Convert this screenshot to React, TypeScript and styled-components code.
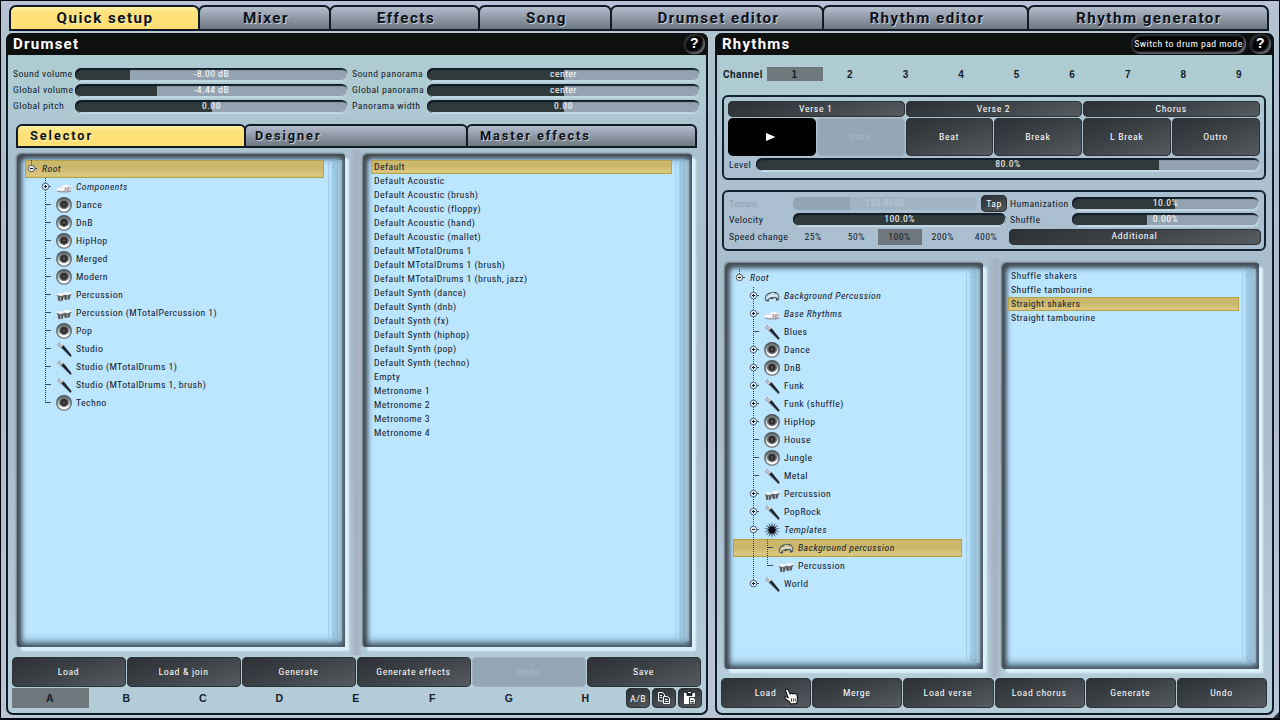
import React from 'react';
import styled, { createGlobalStyle, css } from 'styled-components';

const Global = createGlobalStyle`
  * { box-sizing: border-box; }
  html, body { margin: 0; padding: 0; }
  body {
    width: 1280px; height: 720px; overflow: hidden;
    font-family: "Roboto Condensed", Roboto, "Liberation Sans", sans-serif;
    font-size: 9.8px; letter-spacing: 0.42px; color: #14202c;
    white-space: nowrap;
  }
`;

const Window = styled.div`
  position: relative;
  width: 1280px; height: 720px;
  padding: 4px 5px 4px 5px;
  border: 1px solid #04060e;
  border-width: 1px 1px 2px 1px;
  background: linear-gradient(180deg, #b9c0d6 0, #b2c3d0 30px, #adbccb 160px, #b0bacb 420px, #b9c5d6 700px);
`;

const MainTabs = styled.nav`
  display: flex; height: 26px; margin: 0 4px 2px 3px;
`;

const tabBase = css<{ $active?: boolean }>`
  border: 2px solid #101a24;
  font-family: Roboto, "Liberation Sans", sans-serif;
  font-weight: bold;
  color: #0d1219;
  background: ${p => p.$active
    ? 'linear-gradient(180deg, #fff0a8 0, #ffe27c 25%, #ffdf74 100%)'
    : 'linear-gradient(180deg, #b3bdcb 0, #a0aaba 25%, #7e8893 75%, #6e7880 100%)'};
  text-shadow: 1px 1px 0 ${p => (p.$active ? '#fff0b4' : '#c3ccd8')};
  & + & { margin-left: -2px; }
`;

const MainTab = styled.button<{ $active?: boolean; $w: number }>`
  ${tabBase}
  width: ${p => p.$w}px; height: 26px; padding: 0 0 0 1px;
  border-radius: 7px 7px 0 0;
  font-size: 15.2px; letter-spacing: 1.45px; line-height: 22px;
  & + & { padding-left: 3px; }
  &:last-child { padding-left: 2px; }
`;

const Panels = styled.main`
  display: flex; gap: 7px; height: 682px;
`;

const Panel = styled.section<{ $w: number }>`
  width: ${p => p.$w}px; height: 682px;
  display: flex; flex-direction: column;
  border: 2px solid #0f1b26; border-top: 0;
  border-radius: 7px;
  background: linear-gradient(180deg, #aeccd2 0, #aecbd2 60px, #abc0d0 130px, #a9bfce 230px, #abbdcd 400px, #b3ccd7 640px);
  box-shadow: 0 0 0 1px rgba(200, 216, 230, .35);
`;

const TitleBar = styled.header`
  display: flex; align-items: center; gap: 4px;
  height: 22px; margin: 0 -2px; padding: 0 3px 0 7px;
  border-radius: 7px 7px 0 0;
  background: #0e0f0f; color: #fff;
  flex: none;
`;

const Title = styled.h1`
  margin: 0; flex: 1; line-height: 22px;
  font-family: Roboto, "Liberation Sans", sans-serif; font-size: 15px; letter-spacing: 1.25px;
`;

const BlackPill = styled.button<{ $w: number }>`
  width: ${p => p.$w}px; height: 20px; padding: 0 0 2px;
  border: 0; border-radius: 9px; color: #fff;
  font: inherit; letter-spacing: 0.42px;
  background: #050505;
  box-shadow: inset -2px -2px 2px #63676b, inset 2px 2px 2px #303236;
`;

const Help = styled(BlackPill)`
  font-family: "Liberation Sans", sans-serif; font-size: 14px; font-weight: bold;
`;

const Params = styled.div`
  display: grid; grid-template-columns: 62px 273px 79px 273px;
  grid-auto-rows: 16px; align-items: center;
  padding: 11px 0 0 5px; height: 68px; flex: none;
`;

const ParamLabel = styled.span<{ $second?: boolean }>`
  padding: 0 0 2px ${p => (p.$second ? 4 : 0)}px;
`;

const Track = styled.div<{ $off?: boolean }>`
  position: relative; flex: 1; height: 13px; overflow: hidden;
  border-radius: 6px;
  background: ${p => (p.$off ? '#a0b4c4' : '#93a3b1')};
  box-shadow: 0 1px 0 ${p => (p.$off ? 'transparent' : '#c3dde8')};
  color: ${p => (p.$off ? '#b9cbd8' : '#fff')};
  &::after {
    content: ''; position: absolute; inset: 0; border-radius: 6px;
    box-shadow: ${p => (p.$off ? 'none' : 'inset 1px 2px 1px #101c28, inset -1px -1px 0 #bfd6e2')};
  }
`;

const Fill = styled.div<{ $off?: boolean }>`
  height: 100%; background: ${p => (p.$off ? '#91a5b2' : '#303a3a')};
`;

const Value = styled.span`
  position: absolute; inset: 0; z-index: 1; text-align: center; line-height: 11.5px;
`;

function Slider({ value, fill, off }: { value: string; fill: number; off?: boolean }) {
  return (
    <Track $off={off}>
      <Fill $off={off} style={{ width: `${fill}%` }} />
      <Value>{value}</Value>
    </Track>
  );
}

const SubTabs = styled.nav`
  display: flex; height: 24px; margin: 1px 0 0 8px; flex: none;
`;

const SubTab = styled.button<{ $active?: boolean; $w: number; $pad: number }>`
  ${tabBase}
  width: ${p => p.$w}px; height: 24px; padding: 0 0 0 ${p => p.$pad}px;
  border-radius: 6px 6px 0 0; text-align: left;
  font-size: 12.8px; letter-spacing: 1.9px; line-height: 20px;
`;

const Lists = styled.div<{ $top: number; $left: number; $h: number }>`
  display: flex; margin: ${p => p.$top}px 0 0 ${p => p.$left}px; height: ${p => p.$h}px; flex: none;
`;

const Splitter = styled.div<{ $w: number }>`
  width: ${p => p.$w}px; margin: -4px 0 -8px;
  background: linear-gradient(90deg, rgba(165,180,198,0) 25%, #a6afc0 65%, rgba(165,180,198,0));
`;

const Well = styled.div<{ $w: number; $pad?: number; $gap?: number }>`
  display: flex; gap: ${p => p.$gap ?? 3}px; width: ${p => p.$w}px; height: 100%;
  padding: 6px 3px 6px ${p => p.$pad ?? 7}px;
  border-radius: 5px 3px 1px 3px;
  background: #bce5ff;
  box-shadow: 4px 4px 2px #dcf2fb, -1px -1px 2px #6d7a84,
    inset 4px 4px 4px 0 #434b51, inset -2px -2px 4px 0 #48535c,
    inset -3px -4px 9px 1px rgba(60, 85, 105, .75),
    inset 2px 3px 7px 2px rgba(70, 100, 125, .6);
`;

const Items = styled.div`
  flex: 1; display: flex; flex-direction: column;
`;

const ScrollBar = styled.div`
  display: flex; flex-direction: column; justify-content: space-between; align-items: center;
  width: 14px; padding: 3px 0 2px;
  border-left: 1px solid rgba(130, 175, 205, .45);
  border-right: 1px solid rgba(235, 248, 255, .3);
  background: linear-gradient(90deg, rgba(150,190,215,.1) 15%, rgba(130,175,202,.45) 35%, rgba(130,175,202,.45) 75%, rgba(220,240,255,.3) 85%);
`;

function Chevron({ down }: { down?: boolean }) {
  return (
    <svg width="9" height="6" viewBox="0 0 9 6">
      <path d={down ? 'M1 1l3.5 4L8 1z' : 'M1 5l3.5-4L8 5z'} fill="#a3c9e0" stroke="#8bb4cd" strokeWidth=".7" />
    </svg>
  );
}

const selected = css`
  background: linear-gradient(180deg, #cdb86c 0, #cbb76c 45%, #dcc87e 85%, #cdbb72 100%);
  box-shadow: inset 0 0 0 1px #b3a24c;
`;

const ListRow = styled.div<{ $on?: boolean }>`
  height: 14px; padding-left: 3px; line-height: 14px;
  ${p => p.$on && selected}
`;

const TreeRow = styled.div<{ $on?: boolean; $italic?: boolean }>`
  display: flex; align-items: center; height: 18px;
  font-style: ${p => (p.$italic ? 'italic' : 'normal')};
  ${p => p.$on && selected}
`;

const TreeLabel = styled.span<{ $root?: boolean }>`
  margin-left: ${p => (p.$root ? 3 : 4)}px; line-height: 18px;
`;

const IconSlot = styled.span`
  display: block; width: 16px; height: 18px; margin-left: 3px; flex: none;
  svg { display: block; }
`;

type Guide = 'none' | 'line' | 'tee' | 'end' | 'plus' | 'plusEnd' | 'minus' | 'root';

const GuideSvg = styled.svg`
  display: block; flex: none;
`;

function GuideCell({ kind }: { kind: Guide }) {
  const dash = { stroke: '#2a3d50', strokeWidth: 1, strokeDasharray: '1 1' };
  const hasNode = kind === 'plus' || kind === 'plusEnd' || kind === 'minus' || kind === 'root';
  const bottom = kind === 'line' || kind === 'tee' || kind === 'plus' || kind === 'minus' ? 18 : 9;
  return (
    <GuideSvg width="14" height="18" viewBox="0 0 14 18">
      {kind !== 'none' && <path d={`M6.5 0V${bottom}`} {...dash} />}
      {kind !== 'none' && kind !== 'line' && <path d="M7 8.5H12" stroke="#3d4f60" />}
      {hasNode && (
        <g>
          <circle cx="6.5" cy="8.5" r="3.3" fill={kind === 'root' ? '#e6e2d8' : '#d9effb'} stroke="#4a5763" strokeWidth=".9" />
          <path d={kind.startsWith('plus') ? 'M5 8.5h3M6.5 7v3' : 'M5 8.5h3'} stroke="#101820" />
        </g>
      )}
    </GuideSvg>
  );
}

type IconName = 'speaker' | 'mic' | 'bongo' | 'kit' | 'tamb' | 'star';

function TreeIcon({ name }: { name: IconName }) {
  const box = { width: 16, height: 18, viewBox: '0 0 16 18' };
  switch (name) {
    case 'speaker':
      return (
        <svg {...box}>
          <defs>
            <linearGradient id="rim" x1="0" y1="0" x2="0" y2="1">
              <stop offset="0" stopColor="#495156" /><stop offset="1" stopColor="#868f94" />
            </linearGradient>
            <linearGradient id="cone" x1="0" y1="0" x2="0" y2="1">
              <stop offset="0" stopColor="#697377" /><stop offset=".45" stopColor="#a9b2b6" /><stop offset=".75" stopColor="#ffffff" />
            </linearGradient>
          </defs>
          <circle cx="8" cy="9" r="8" fill="url(#rim)" />
          <circle cx="8" cy="9" r="6.4" fill="url(#cone)" />
          <circle cx="8" cy="8.400" r="4.900" fill="#6c7478" />
          <circle cx="8" cy="8.300" r="3.400" fill="#2d2626" />
          <circle cx="8" cy="8.600" r="1.500" fill="#5c5152" />
        </svg>
      );
    case 'mic':
      return (
        <svg {...box}>
          <path d="M4.600 7L7.600 5.200L15.600 15.200L14.600 17Z" fill="#1c2329" />
          <path d="M5 7.400L13.800 16.400" stroke="#7d8a94" strokeWidth=".8" />
          <path d="M1.400 5L4.200 2.400L7.400 5.400L4.600 7.400Z" fill="#d6dadd" />
          <path d="M1.200 5.200L4 2.400M2.600 6.600L5 4.400M4.400 7.800L7.200 5.400" stroke="#7d7479" strokeWidth=".9" />
        </svg>
      );
    case 'bongo':
      return (
        <svg {...box}>
          <path d="M1.200 8.500L2.200 14.400Q4.500 16 7 14.200L7.600 11L8.400 13.400Q11 14.800 13.600 13.200L15.200 8Z" fill="#6f777b" />
          <path d="M3 10.500v4.300M6.200 10.500v4M9.800 9.500v4M13 9v4" stroke="#3c4245" strokeWidth="1" />
          <path d="M4.500 10.500v5M11.400 9.500v4.500" stroke="#aeb7bb" strokeWidth=".8" />
          <ellipse cx="4.400" cy="8.600" rx="3.900" ry="1.700" fill="#f4f6f7" />
          <ellipse cx="11.600" cy="7.700" rx="4" ry="1.600" fill="#fbfcfc" />
          <path d="M.8 9.400Q4 11.400 8 9.900M7.800 9.100Q11.500 10.700 15.500 8.200" fill="none" stroke="#5a6064" strokeWidth=".9" />
        </svg>
      );
    case 'kit':
      return (
        <svg {...box}>
          <path d="M.8 11.800Q2.600 9 6.400 9.200L11 7L15 8L14.800 12Q10 15 5 13.800Z" fill="#e9e4e8" />
          <ellipse cx="5" cy="11" rx="4.400" ry="1.500" fill="#fbf8fa" />
          <ellipse cx="9.400" cy="8" rx="3.200" ry="1.200" fill="#ffffff" />
          <path d="M1.400 13Q4 14.400 8.400 13.800Q12 14.600 15 12.800" fill="none" stroke="#7f7980" strokeWidth="1" />
          <path d="M9.800 9.200L8.800 12.600M11.200 10Q13 9.400 14.600 10.600" fill="none" stroke="#94777b" strokeWidth=".9" />
          <circle cx="11.600" cy="11.800" r="1.100" fill="#9c8589" />
        </svg>
      );
    case 'tamb':
      return (
        <svg {...box}>
          <path d="M1.400 12.900Q.6 8.900 4.200 6.700Q9 4.100 13.200 6.300Q15.400 8.500 14.600 12.500L12.600 13.100Q13.400 10.600 11.800 10.400Q7 10.400 4.400 11.900L4 13.900Q2.400 14.500 1.400 12.900Z" fill="rgba(215,222,226,.35)" stroke="#5f676e" strokeWidth="1.100" />
          <path d="M3.600 9.600Q7.600 7.600 13.400 9.200" fill="none" stroke="#e2ebef" strokeWidth=".9" />
          <path d="M2.800 13l2 .8M6.400 11.400l2.800-.4M12.200 11.600l1.800 1.200M4.600 7l1.400-.8M10.400 5.500l1.600.6" stroke="#3a4248" strokeWidth="1.300" />
        </svg>
      );
    default:
      return (
        <svg {...box}>
          {[0, 26, 51, 77, 103, 129, 154].map(a => (
            <path key={a} d="M8 .8L9.100 9L8 17.200L6.900 9Z" fill="#18212a" transform={`rotate(${a} 8 9)`} />
          ))}
          <circle cx="8" cy="9" r="3.300" fill="#0a0e14" />
        </svg>
      );
  }
}

interface Node { label: string; guides: Guide[]; icon?: IconName; italic?: boolean; on?: boolean }

function Tree({ nodes }: { nodes: Node[] }) {
  return (
    <Items>
      {nodes.map((n, i) => (
        <TreeRow key={i} $on={n.on} $italic={n.italic}>
          {n.guides.map((g, j) => <GuideCell key={j} kind={g} />)}
          {n.icon && <IconSlot><TreeIcon name={n.icon} /></IconSlot>}
          <TreeLabel $root={!n.icon}>{n.label}</TreeLabel>
        </TreeRow>
      ))}
    </Items>
  );
}

const node = (label: string, guide: Guide, icon: IconName, italic = false): Node =>
  ({ label, guides: ['none', guide], icon, italic });

const drumTree: Node[] = [
  { label: 'Root', guides: ['root'], italic: true, on: true },
  node('Components', 'plus', 'kit', true),
  node('Dance', 'tee', 'speaker'),
  node('DnB', 'tee', 'speaker'),
  node('HipHop', 'tee', 'speaker'),
  node('Merged', 'tee', 'speaker'),
  node('Modern', 'tee', 'speaker'),
  node('Percussion', 'tee', 'bongo'),
  node('Percussion (MTotalPercussion 1)', 'tee', 'bongo'),
  node('Pop', 'tee', 'speaker'),
  node('Studio', 'tee', 'mic'),
  node('Studio (MTotalDrums 1)', 'tee', 'mic'),
  node('Studio (MTotalDrums 1, brush)', 'tee', 'mic'),
  node('Techno', 'end', 'speaker'),
];

const rhythmTree: Node[] = [
  { label: 'Root', guides: ['root'], italic: true },
  node('Background Percussion', 'plus', 'tamb', true),
  node('Base Rhythms', 'plus', 'kit', true),
  node('Blues', 'tee', 'mic'),
  node('Dance', 'plus', 'speaker'),
  node('DnB', 'plus', 'speaker'),
  node('Funk', 'plus', 'mic'),
  node('Funk (shuffle)', 'plus', 'mic'),
  node('HipHop', 'plus', 'speaker'),
  node('House', 'tee', 'speaker'),
  node('Jungle', 'tee', 'speaker'),
  node('Metal', 'tee', 'mic'),
  node('Percussion', 'plus', 'bongo'),
  node('PopRock', 'plus', 'mic'),
  node('Templates', 'minus', 'star', true),
  { label: 'Background percussion', guides: ['none', 'line', 'tee'], icon: 'tamb', italic: true, on: true },
  { label: 'Percussion', guides: ['none', 'line', 'end'], icon: 'bongo' },
  node('World', 'plusEnd', 'mic'),
];

const presets = [
  'Default', 'Default Acoustic', 'Default Acoustic (brush)', 'Default Acoustic (floppy)',
  'Default Acoustic (hand)', 'Default Acoustic (mallet)', 'Default MTotalDrums 1',
  'Default MTotalDrums 1 (brush)', 'Default MTotalDrums 1 (brush, jazz)', 'Default Synth (dance)',
  'Default Synth (dnb)', 'Default Synth (fx)', 'Default Synth (hiphop)', 'Default Synth (pop)',
  'Default Synth (techno)', 'Empty', 'Metronome 1', 'Metronome 2', 'Metronome 3', 'Metronome 4',
];

const rhythms = ['Shuffle shakers', 'Shuffle tambourine', 'Straight shakers', 'Straight tambourine'];

function Bar() {
  return <ScrollBar><Chevron /><Chevron down /></ScrollBar>;
}

const ButtonRow = styled.div<{ $top?: number; $pad?: string }>`
  display: flex; gap: 1px; margin-top: ${p => p.$top ?? 0}px; padding: ${p => p.$pad ?? 0};
  flex: none;
`;

const Button = styled.button<{ $h: number; $kind?: 'off' | 'play'; $w?: number }>`
  flex: ${p => (p.$w ? 'none' : '1 1 0')};
  width: ${p => (p.$w ? `${p.$w}px` : 'auto')};
  height: ${p => p.$h}px; min-width: 0; padding: 0 1px 2px 0;
  display: flex; align-items: center; justify-content: center;
  border: 0; border-radius: 5px; color: #fff;
  font: inherit; letter-spacing: 0.65px;
  background: linear-gradient(160deg, #2c3034 0, #3c4145 45%, #565c60 100%);
  box-shadow: inset 0 0 0 1px #2b3238;
  ${p => p.$kind === 'off' && css`
    background: #94a7b4; box-shadow: inset 0 0 0 1px #9cb0bf; color: #aabcc8;
  `}
  ${p => p.$kind === 'play' && css`background: #000; box-shadow: none; padding-bottom: 0;`}
`;

const SmallButton = styled(Button)`
  padding: 0; letter-spacing: 0.4px;
`;

const Segments = styled.div<{ $h: number; $w: number; $size?: number }>`
  display: flex; width: ${p => p.$w}px; height: ${p => p.$h}px; flex: none;
  ${p => p.$size && css`
    font-family: "Liberation Sans", sans-serif; font-weight: bold;
    font-size: ${p.$size}px; letter-spacing: 0;
  `}
`;

const Segment = styled.span<{ $on?: boolean; $lh: number }>`
  flex: 1 1 0; text-align: center; line-height: ${p => p.$lh}px; padding-right: 1px;
  background: ${p => (p.$on ? '#6f787c' : 'transparent')};
`;

const SlotRow = styled.div`
  display: flex; align-items: center; gap: 2px; padding: 1px 0 0 4px;
`;

const ChannelRow = styled.div`
  display: flex; align-items: center; height: 14px; margin: 12px 0 14px 6px; flex: none;
`;

const ChannelLabel = styled.span`
  width: 44px; font-family: Roboto, sans-serif; font-size: 10px; font-weight: bold;
`;

const Group = styled.div<{ $h: number; $mb?: number }>`
  height: ${p => p.$h}px; margin: 0 6px ${p => p.$mb ?? 0}px 5px; padding: 4px;
  border: 2px solid #14222d; border-radius: 6px; flex: none;
  background: rgba(170, 190, 208, .18);
`;

const LevelRow = styled.div`
  display: grid; grid-template-columns: 27px 504px; align-items: center;
  padding: 1px 0 0 1px; height: 15px;
`;

const TempoRow = styled.div<{ $down?: boolean }>`
  display: flex; align-items: center; height: 17px; padding-left: 1px;
  margin-top: ${p => (p.$down ? 0 : -1)}px;
`;

const Box = styled.div<{ $w: number; $pl?: number; $pr?: number; $off?: boolean }>`
  display: flex; width: ${p => p.$w}px; flex: none;
  padding: 0 ${p => p.$pr ?? 0}px 0 ${p => p.$pl ?? 0}px;
  color: ${p => (p.$off ? '#8da0b0' : 'inherit')};
`;

const Cursor = styled.svg`
  position: absolute; left: 783px; top: 687px;
`;

const Grip = styled.svg`
  position: absolute; right: 0; bottom: 0;
`;

const mainTabs: [string, number][] = [
  ['Quick setup', 191], ['Mixer', 133], ['Effects', 151], ['Song', 134],
  ['Drumset editor', 214], ['Rhythm editor', 207], ['Rhythm generator', 242],
];

const leftParams: [string, string, number, string, string, number][] = [
  ['Sound volume', '-8.00 dB', 20, 'Sound panorama', 'center', 50.2],
  ['Global volume', '-4.44 dB', 30, 'Global panorama', 'center', 50.2],
  ['Global pitch', '0.00', 50.2, 'Panorama width', '0.00', 50.2],
];

export default function App() {
  return (
    <>
      <Global />
      <Window>
        <MainTabs>
          {mainTabs.map(([t, w], i) => <MainTab key={t} $w={w} $active={i === 0}>{t}</MainTab>)}
        </MainTabs>
        <Panels>
          <Panel $w={703}>
            <TitleBar>
              <Title>Drumset</Title>
              <Help $w={21}>?</Help>
            </TitleBar>
            <Params>
              {leftParams.map(([a, v, f, b, w, g]) => (
                <React.Fragment key={a}>
                  <ParamLabel>{a}</ParamLabel><Slider value={v} fill={f} />
                  <ParamLabel $second>{b}</ParamLabel><Slider value={w} fill={g} />
                </React.Fragment>
              ))}
            </Params>
            <SubTabs>
              <SubTab $w={230} $pad={12} $active>Selector</SubTab>
              <SubTab $w={224} $pad={9}>Designer</SubTab>
              <SubTab $w={231} $pad={12}>Master effects</SubTab>
            </SubTabs>
            <Lists $top={6} $left={9} $h={493}>
              <Well $w={328} $pad={8} $gap={4}><Tree nodes={drumTree} /><Bar /></Well>
              <Splitter $w={18} />
              <Well $w={329} $pad={8}>
                <Items>{presets.map((t, i) => <ListRow key={t} $on={i === 0}>{t}</ListRow>)}</Items>
                <Bar />
              </Well>
            </Lists>
            <ButtonRow $top={10} $pad="0 5px 0 4px">
              <Button $h={30}>Load</Button>
              <Button $h={30}>Load &amp; join</Button>
              <Button $h={30}>Generate</Button>
              <Button $h={30}>Generate effects</Button>
              <Button $h={30} $kind="off">Undo</Button>
              <Button $h={30}>Save</Button>
            </ButtonRow>
            <SlotRow>
              <Segments $h={20} $w={612} $size={10.5}>
                {'ABCDEFGH'.split('').map((c, i) => <Segment key={c} $on={i === 0} $lh={21}>{c}</Segment>)}
              </Segments>
              <SmallButton $h={20} $w={24}>A/B</SmallButton>
              <SmallButton $h={20} $w={24}>
                <svg width="14" height="14" viewBox="0 0 14 14" fill="none" stroke="#fff">
                  <path d="M1.500 1.500h4l2 2v6.500h-6z" />
                  <path d="M3 4.500h2M3 6.500h2" />
                  <path d="M6.500 5.500h4l2 2v5h-6z" fill="#3c4145" />
                  <path d="M8 8.500h2.500M8 10.500h3.500" />
                </svg>
              </SmallButton>
              <SmallButton $h={20} $w={24}>
                <svg width="14" height="14" viewBox="0 0 14 14" fill="none" stroke="#fff">
                  <path d="M1 2h11v4H7v7H1z" fill="#fff" stroke="none" />
                  <path d="M4 1.500h5v3H4z" fill="#22272b" stroke="#22272b" />
                  <path d="M5 1.500h3" stroke="#fff" />
                  <path d="M6.500 6.500h4l2 2v4.500h-6z" fill="#fff" stroke="#33383c" />
                  <path d="M8 9.500h2.500M8 11.500h3" stroke="#33383c" />
                </svg>
              </SmallButton>
            </SlotRow>
          </Panel>

          <Panel $w={559}>
            <TitleBar>
              <Title>Rhythms</Title>
              <BlackPill $w={115}>Switch to drum pad mode</BlackPill>
              <Help $w={21}>?</Help>
            </TitleBar>
            <ChannelRow>
              <ChannelLabel>Channel</ChannelLabel>
              <Segments $h={14} $w={500} $size={10}>
                {'123456789'.split('').map((c, i) => <Segment key={c} $on={i === 0} $lh={15}>{c}</Segment>)}
              </Segments>
            </ChannelRow>
            <Group $h={85} $mb={10}>
              <ButtonRow>
                <Button $h={16}>Verse 1</Button>
                <Button $h={16}>Verse 2</Button>
                <Button $h={16}>Chorus</Button>
              </ButtonRow>
              <ButtonRow $top={1}>
                <Button $h={38} $kind="play">
                  <svg width="10" height="8" viewBox="0 0 10 8"><path d="M0 0L9.500 4L0 8z" fill="#fff" /></svg>
                </Button>
                <Button $h={38} $kind="off">Intro</Button>
                <Button $h={38}>Beat</Button>
                <Button $h={38}>Break</Button>
                <Button $h={38}>L Break</Button>
                <Button $h={38}>Outro</Button>
              </ButtonRow>
              <LevelRow><span>Level</span><Slider value="80.0%" fill={80} /></LevelRow>
            </Group>
            <Group $h={61}>
              <TempoRow>
                <Box $w={64} $off>Tempo</Box>
                <Box $w={188} $pr={4}><Slider value="120.0000" fill={31} off /></Box>
                <SmallButton $h={17} $w={26}>Tap</SmallButton>
                <Box $w={65} $pl={3}>Humanization</Box>
                <Box $w={187}><Slider value="10.0%" fill={55} /></Box>
              </TempoRow>
              <TempoRow>
                <Box $w={64}>Velocity</Box>
                <Box $w={213}><Slider value="100.0%" fill={100} /></Box>
                <Box $w={66} $pl={4}>Shuffle</Box>
                <Box $w={187}><Slider value="0.00%" fill={40} /></Box>
              </TempoRow>
              <TempoRow $down>
                <Box $w={63}>Speed change</Box>
                <Segments $h={16} $w={216}>
                  {['25%', '50%', '100%', '200%', '400%'].map((c, i) => <Segment key={c} $on={i === 2} $lh={16}>{c}</Segment>)}
                </Segments>
                <Box $w={253} $pl={1}><Button $h={16}>Additional</Button></Box>
              </TempoRow>
            </Group>
            <Lists $top={12} $left={8} $h={406}>
              <Well $w={258} $pad={8} $gap={4}><Tree nodes={rhythmTree} /><Bar /></Well>
              <Splitter $w={19} />
              <Well $w={257} $pad={6}>
                <Items>{rhythms.map((t, i) => <ListRow key={t} $on={i === 2}>{t}</ListRow>)}</Items>
                <Bar />
              </Well>
            </Lists>
            <ButtonRow $top={9} $pad="0 5px 0 4px">
              {['Load', 'Merge', 'Load verse', 'Load chorus', 'Generate', 'Undo'].map(t => <Button key={t} $h={30}>{t}</Button>)}
            </ButtonRow>
          </Panel>
        </Panels>
        <Cursor width="15" height="17" viewBox="0 0 16 18">
          <path d="M1.600 2.400Q3-.2 4.600 2L6.600 6.400Q7.800 4.800 9 6.200Q10.200 4.800 11.400 6.200Q13 5.400 13.800 7.200L14.400 11.500L13.600 16.500L7 17L5.800 14.600L1.200 11.200Q.2 9.200 2.600 9.300L4.400 10.200Z" fill="#fff" stroke="#0a0a0a" strokeWidth="1.100" />
          <path d="M8 11v3.500M10 11v3.500M12 10.800v3.500" stroke="#111" strokeWidth=".8" />
        </Cursor>
        <Grip width="6" height="6" viewBox="0 0 6 6"><path d="M6 0V6H0Z" fill="#26333f" /></Grip>
      </Window>
    </>
  );
}
